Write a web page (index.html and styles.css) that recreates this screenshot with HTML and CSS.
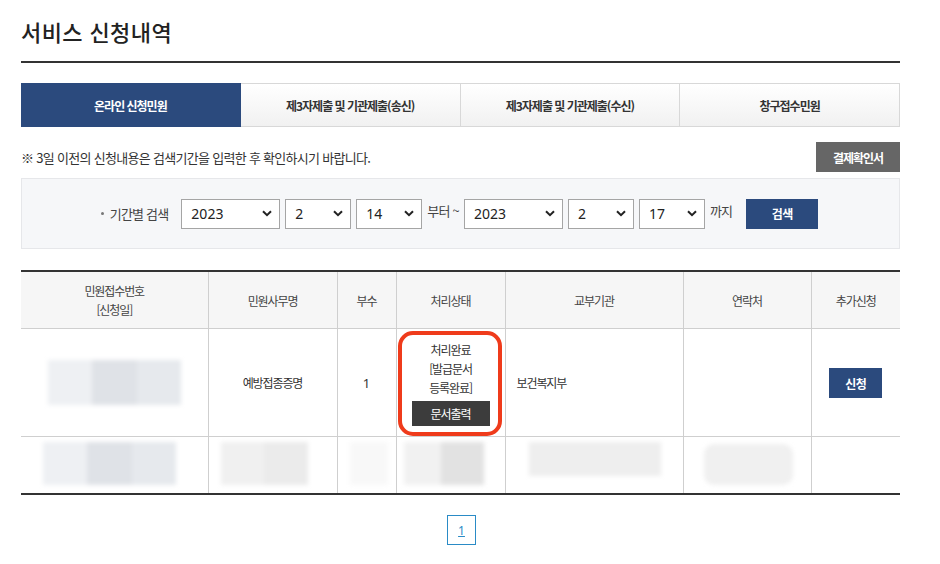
FILE: index.html
```html
<!DOCTYPE html>
<html lang="ko">
<head>
    <meta charset="UTF-8">
    <meta name="viewport" content="width=device-width, initial-scale=1.0">
    <title>서비스 신청내역</title>
    <link rel="stylesheet" href="styles.css">
</head>
<body>
    <div class="container">
        <h1>서비스 신청내역</h1>

        <ul class="tabs">
            <li class="on">온라인 신청민원</li>
            <li>제3자제출 및 기관제출(송신)</li>
            <li>제3자제출 및 기관제출(수신)</li>
            <li>창구접수민원</li>
        </ul>

        <div class="notice-row">
            <p class="notice">※ 3일 이전의 신청내용은 검색기간을 입력한 후 확인하시기 바랍니다.</p>
            <button type="button" class="btn-gray">결제확인서</button>
        </div>

        <div class="search-box">
            <span class="search-label">기간별 검색</span>
            <div class="sel w-year"><span>2023</span><svg width="10" height="7" viewBox="0 0 10 7"><path d="M1 1.2l4 4 4-4" fill="none" stroke="#222" stroke-width="2"/></svg></div>
            <div class="sel"><span>2</span><svg width="10" height="7" viewBox="0 0 10 7"><path d="M1 1.2l4 4 4-4" fill="none" stroke="#222" stroke-width="2"/></svg></div>
            <div class="sel"><span>14</span><svg width="10" height="7" viewBox="0 0 10 7"><path d="M1 1.2l4 4 4-4" fill="none" stroke="#222" stroke-width="2"/></svg></div>
            <span class="search-text">부터 ~</span>
            <div class="sel w-year"><span>2023</span><svg width="10" height="7" viewBox="0 0 10 7"><path d="M1 1.2l4 4 4-4" fill="none" stroke="#222" stroke-width="2"/></svg></div>
            <div class="sel"><span>2</span><svg width="10" height="7" viewBox="0 0 10 7"><path d="M1 1.2l4 4 4-4" fill="none" stroke="#222" stroke-width="2"/></svg></div>
            <div class="sel"><span>17</span><svg width="10" height="7" viewBox="0 0 10 7"><path d="M1 1.2l4 4 4-4" fill="none" stroke="#222" stroke-width="2"/></svg></div>
            <span class="search-text">까지</span>
            <button type="button" class="btn-blue btn-search">검색</button>
        </div>

        <table class="list">
            <colgroup>
                <col style="width:187px">
                <col style="width:129px">
                <col style="width:59px">
                <col style="width:109px">
                <col style="width:178px">
                <col style="width:128px">
                <col style="width:89px">
            </colgroup>
            <thead>
                <tr>
                    <th>민원접수번호<br>[신청일]</th>
                    <th>민원사무명</th>
                    <th>부수</th>
                    <th>처리상태</th>
                    <th>교부기관</th>
                    <th>연락처</th>
                    <th>추가신청</th>
                </tr>
            </thead>
            <tbody>
                <tr class="row-main">
                    <td>
                        <div class="blur b-num">
                            <i class="s1"></i><i class="s2"></i><i class="s3"></i>
                        </div>
                    </td>
                    <td>예방접종증명</td>
                    <td class="num">1</td>
                    <td class="status">
                        <div class="status-text">처리완료<br>[발급문서<br>등록완료]</div>
                        <button type="button" class="btn-dark">문서출력</button>
                        <span class="mark"></span>
                    </td>
                    <td class="left">보건복지부</td>
                    <td></td>
                    <td><button type="button" class="btn-blue btn-apply">신청</button></td>
                </tr>
                <tr class="row-sub">
                    <td>
                        <div class="blur b-num">
                            <i class="s1"></i><i class="s2"></i><i class="s3"></i>
                        </div>
                    </td>
                    <td>
                        <div class="blur b-name">
                            <i class="g1"></i><i class="g2"></i>
                        </div>
                    </td>
                    <td><div class="blur b-cnt"></div></td>
                    <td>
                        <div class="blur b-state">
                            <i class="g1"></i><i class="g3"></i>
                        </div>
                    </td>
                    <td class="left"><div class="blur b-org"></div></td>
                    <td><div class="blur b-tel"></div></td>
                    <td></td>
                </tr>
            </tbody>
        </table>

        <div class="paging">
            <a href="#" class="page on">1</a>
        </div>
    </div>
</body>
</html>
```

FILE: styles.css
```css
body {
    margin: 0;
    font-family: "Noto Sans CJK KR", "Noto Sans", sans-serif;
    color: #333;
    background-color: #fff;
}
.container {
    width: 879px;
    margin-left: 21px;
}
h1 {
    margin: 0;
    padding: 14px 0 13px;
    font-size: 22px;
    line-height: 34px;
    font-weight: 500;
    letter-spacing: 0.4px;
    color: #222;
    border-bottom: 2px solid #333;
}

/* 탭 */
.tabs {
    display: flex;
    list-style: none;
    margin: 20px 0 0;
    padding: 0;
    height: 44px;
}
.tabs li {
    flex: 1;
    display: flex;
    align-items: center;
    justify-content: center;
    font-size: 12px;
    font-weight: bold;
    letter-spacing: -1px;
    color: #333;
    border: 1px solid #d8d8d8;
    border-left: none;
    background: linear-gradient(#fff, #f1f1f1);
}
.tabs li:last-child {
    border-right: 1px solid #d8d8d8;
}
.tabs li.on {
    background: #2b4a7d;
    border-color: #2b4a7d;
    color: #fff;
}

/* 안내 */
.notice-row {
    display: flex;
    justify-content: space-between;
    align-items: center;
    margin-top: 15px;
}
.notice {
    margin: 0;
    font-size: 13px;
    letter-spacing: -0.7px;
    color: #333;
}
button {
    font-family: inherit;
    border: none;
    cursor: pointer;
    padding: 0;
}
.btn-gray {
    width: 84px;
    height: 30px;
    background-color: #666;
    color: #fff;
    font-size: 12px;
    font-weight: bold;
    letter-spacing: -1px;
}

/* 검색 */
.search-box {
    display: flex;
    justify-content: center;
    align-items: center;
    gap: 5px;
    margin-top: 6px;
    height: 69px;
    background-color: #f6f7f9;
    border: 1px solid #e6e7ea;
    padding-right: 2px;
}
.search-label {
    font-size: 13px;
    letter-spacing: -0.8px;
    color: #444;
    margin-right: 8px;
}
.search-label::before {
    content: "";
    display: inline-block;
    width: 3px;
    height: 3px;
    border-radius: 50%;
    background-color: #777;
    vertical-align: middle;
    margin: 0 6px 3px 0;
}
.search-text {
    font-size: 13px;
    letter-spacing: -0.8px;
    color: #444;
    margin-bottom: 6px;
}
.sel {
    display: flex;
    justify-content: space-between;
    align-items: center;
    box-sizing: border-box;
    width: 66px;
    height: 30px;
    padding: 0 7px 0 9px;
    background-color: #fff;
    border: 1px solid #a5a5a5;
    font-family: "Noto Sans", sans-serif;
    font-size: 14px;
    color: #222;
}
.sel.w-year {
    width: 99px;
}
.btn-blue {
    background-color: #2b4a7d;
    color: #fff;
    font-size: 12px;
    font-weight: bold;
    letter-spacing: -0.5px;
}
.btn-search {
    width: 72px;
    height: 30px;
    margin-left: 9px;
}

/* 목록 */
.list {
    width: 879px;
    margin-top: 21px;
    border-collapse: collapse;
    table-layout: fixed;
    border-top: 2px solid #333;
    border-bottom: 2px solid #333;
}
.list th,
.list td {
    border-left: 1px solid #cfcfcf;
    border-bottom: 1px solid #cfcfcf;
    text-align: center;
    font-size: 12px;
    letter-spacing: -1.1px;
    padding: 0 5px;
}
.list th:first-child,
.list td:first-child {
    border-left: none;
}
.list th {
    height: 56px;
    font-weight: normal;
    line-height: 19px;
    color: #444;
    background-color: #f6f6f6;
}
.list td {
    color: #333;
}
.list td.left {
    text-align: left;
    padding-left: 11px;
}
.list td.num {
    font-family: "Noto Sans", sans-serif;
    font-size: 13px;
    letter-spacing: 0;
}
.row-main td {
    height: 107px;
}
.row-sub td {
    height: 56px;
    padding: 0;
}
.status {
    position: relative;
}
.status-text {
    line-height: 19px;
}
.btn-dark {
    display: block;
    width: 78px;
    height: 25px;
    margin: 4px auto 0;
    background-color: #3c3c3c;
    color: #fff;
    font-size: 12px;
    letter-spacing: -1.1px;
}
.mark {
    position: absolute;
    left: 1px;
    top: 2px;
    right: 3px;
    bottom: 0;
    border: 4px solid #ef3b1b;
    border-radius: 15px;
}
.btn-apply {
    width: 53px;
    height: 30px;
    margin-top: 1px;
}

/* 가림 처리 */
.blur {
    display: flex;
    filter: blur(2px);
    margin: 0 auto;
}
.blur i {
    flex: 1;
}
.b-num {
    width: 133px;
    height: 45px;
    margin-left: 22px;
}
.b-num .s1 { background-color: #eef0f3; }
.b-num .s2 { background-color: #dfe2e7; }
.b-num .s3 { background-color: #e6e9ed; }
.row-sub .b-num {
    height: 43px;
    margin-top: -4px;
}
.b-name {
    width: 87px;
    height: 43px;
    margin-left: 12px;
    margin-top: -4px;
}
.b-name .g1 { background-color: #f0f0f0; }
.b-name .g2 { background-color: #ebebeb; }
.b-cnt {
    width: 38px;
    height: 43px;
    margin: -4px auto 0 12px;
    background-color: #f8f8f8;
}
.b-state {
    width: 80px;
    height: 43px;
    margin: -4px 0 0 7px;
}
.b-state .g1 { background-color: #f1f1f1; }
.b-state .g3 { background-color: #e2e2e2; flex: 1.15; }
.b-org {
    width: 132px;
    height: 34px;
    margin: -13px 0 0 12px;
    background-color: #eeeeee;
}
.b-tel {
    width: 89px;
    height: 41px;
    margin: -2px 0 0 20px;
    background-color: #f0f0f0;
    border-radius: 10px;
}

/* 페이지 */
.paging {
    display: flex;
    justify-content: center;
    margin-top: 20px;
    padding-left: 2px;
}
.page {
    display: flex;
    align-items: center;
    justify-content: center;
    box-sizing: border-box;
    width: 29px;
    height: 30px;
    border: 1px solid #2a8bc6;
    color: #2a8bc6;
    font-family: "Noto Sans", sans-serif;
    font-size: 12px;
}
```
